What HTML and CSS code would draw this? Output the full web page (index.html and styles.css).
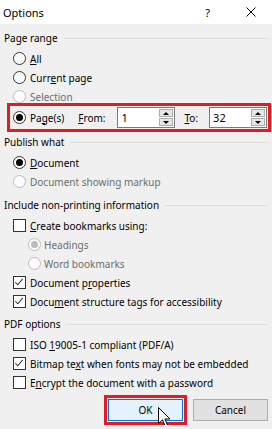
FILE: index.html
```html
<!DOCTYPE html>
<html lang="en">
<head>
    <meta charset="UTF-8">
    <meta name="viewport" content="width=device-width, initial-scale=1.0">
    <title>Options</title>
    <link rel="stylesheet" href="styles.css">
</head>
<body>

<div class="titlebar">
    <span class="title">Options</span>
    <span class="help">?</span>
    <svg class="close" width="10" height="10" viewBox="0 0 10 10">
        <path d="M0.5 0.5 L9.5 9.5 M9.5 0.5 L0.5 9.5" stroke="#000" stroke-width="1" fill="none"/>
    </svg>
</div>

<div class="dialog">
    <div class="group-title first">Page range</div>
    <div class="row first-row"><span class="radio"></span><span><u>A</u>ll</span></div>
    <div class="row"><span class="radio"></span><span>Curr<u>e</u>nt page</span></div>
    <div class="row disabled"><span class="radio"></span><span>Selection</span></div>

    <div class="highlight page-row">
        <span class="radio checked"></span>
        <span class="page-label">Pa<u>g</u>e(s)</span>
        <span class="from-label"><u>F</u>rom:</span>
        <div class="spinner from-spin">
            <span class="spin-value">1</span>
            <span class="spin-buttons">
                <span class="spin-btn"><span class="arrow-up"></span></span>
                <span class="spin-btn"><span class="arrow-down"></span></span>
            </span>
        </div>
        <span class="to-label"><u>T</u>o:</span>
        <div class="spinner to-spin">
            <span class="spin-value">32</span>
            <span class="spin-buttons">
                <span class="spin-btn"><span class="arrow-up"></span></span>
                <span class="spin-btn"><span class="arrow-down"></span></span>
            </span>
        </div>
    </div>

    <div class="group-title publish">Publish what</div>
    <div class="row first-row"><span class="radio checked"></span><span><u>D</u>ocument</span></div>
    <div class="row disabled"><span class="radio"></span><span>Document showing markup</span></div>

    <div class="group-title include">Include non-printing information</div>
    <div class="row first-row"><span class="checkbox"></span><span><u>C</u>reate bookmarks using:</span></div>
    <div class="row sub disabled"><span class="radio checked"></span><span>Headings</span></div>
    <div class="row sub disabled"><span class="radio"></span><span>Word bookmarks</span></div>
    <div class="row"><span class="checkbox checked"></span><span>Document p<u>r</u>operties</span></div>
    <div class="row"><span class="checkbox checked"></span><span>Docu<u>m</u>ent structure tags for accessibility</span></div>

    <div class="group-title pdf">PDF options</div>
    <div class="row first-row"><span class="checkbox"></span><span>ISO <u>1</u>9005-1 compliant (PDF/A)</span></div>
    <div class="row"><span class="checkbox checked"></span><span>Bitmap te<u>x</u>t when fonts may not be embedded</span></div>
    <div class="row"><span class="checkbox"></span><span>E<u>n</u>crypt the document with a password</span></div>

    <div class="buttons">
        <div class="highlight ok-wrap">
            <button class="btn btn-default">OK</button>
            <svg class="cursor" width="13" height="21" viewBox="0 0 13 21">
                <path d="M0.5 0.5 L0.5 16.5 L4.5 12.8 L7.3 19.5 L9.6 18.5 L6.9 12 L12 12 Z" fill="#fff" stroke="#000" stroke-width="1" stroke-linejoin="miter"/>
            </svg>
        </div>
        <button class="btn">Cancel</button>
    </div>
</div>

</body>
</html>
```

FILE: styles.css
```css
body {
    font-family: "Noto Sans", "Open Sans", sans-serif;
    font-size: 10px;
    margin: 0;
    background-color: #f0f0f0;
    color: #000;
}
u {
    text-underline-offset: 1px;
}
.titlebar {
    height: 24px;
    background: #fff;
    display: flex;
    align-items: center;
    padding-left: 3px;
}
.title {
    font-size: 11px;
    flex: 1;
}
.help {
    font-size: 11px;
    margin-right: 36px;
}
.close {
    margin-right: 16px;
}
.dialog {
    padding: 0 4px 0 4px;
}
.group-title {
    height: 16px;
    display: flex;
    align-items: center;
    gap: 6px;
    white-space: nowrap;
}
.group-title::after {
    content: "";
    flex: 1;
    height: 1px;
    background: #dcdcdc;
}
.group-title.first {
    margin-top: 6px;
}
.group-title.publish {
    margin-top: 2px;
}
.group-title.include {
    margin-top: 6px;
}
.group-title.pdf {
    margin-top: 5px;
}
.row {
    height: 19px;
    display: flex;
    align-items: center;
    gap: 4px;
    padding-left: 9px;
    white-space: nowrap;
}
.row.first-row {
    margin-top: 3px;
}
.row.sub {
    padding-left: 24px;
    gap: 3px;
}
.disabled {
    color: #6d6d6d;
}
.radio {
    width: 13px;
    height: 13px;
    box-sizing: border-box;
    border: 1px solid #333;
    border-radius: 50%;
    background: #fff;
    display: flex;
    align-items: center;
    justify-content: center;
    flex: none;
}
.radio.checked::after {
    content: "";
    width: 7px;
    height: 7px;
    border-radius: 50%;
    background: #000;
}
.disabled .radio {
    border-color: #bcbcbc;
    background: #fcfcfc;
}
.disabled .radio.checked::after {
    background: #bcbcbc;
}
.checkbox {
    width: 13px;
    height: 13px;
    box-sizing: border-box;
    border: 1px solid #333;
    background: #fff;
    flex: none;
    position: relative;
}
.checkbox.checked::after {
    content: "";
    position: absolute;
    left: 3px;
    top: 0px;
    width: 3px;
    height: 7px;
    border-right: 1px solid #333;
    border-bottom: 1px solid #333;
    transform: rotate(40deg);
}
.highlight {
    border: 3px solid #e31b23;
}
.page-row {
    margin: -3px -3px 0 3px;
    height: 23px;
    display: flex;
    align-items: center;
    padding-left: 3px;
    white-space: nowrap;
}
.page-label {
    margin-left: 4px;
}
.from-label {
    margin-left: 14px;
}
.to-label {
    margin-left: 9px;
}
.spinner {
    width: 58px;
    height: 21px;
    box-sizing: border-box;
    border: 1px solid #7a7a7a;
    background: #fff;
    display: flex;
    align-items: center;
}
.from-spin {
    margin-left: 12px;
}
.to-spin {
    margin-left: 11px;
}
.spin-value {
    flex: 1;
    padding-left: 3px;
    font-size: 11px;
}
.spin-buttons {
    display: flex;
    flex-direction: column;
    gap: 1px;
    margin-right: 1px;
}
.spin-btn {
    width: 14px;
    height: 8px;
    box-sizing: border-box;
    border: 1px solid #adadad;
    background: #e6e6e6;
    display: flex;
    align-items: center;
    justify-content: center;
}
.arrow-up {
    width: 0;
    height: 0;
    border-left: 3px solid transparent;
    border-right: 3px solid transparent;
    border-bottom: 3px solid #000;
}
.arrow-down {
    width: 0;
    height: 0;
    border-left: 3px solid transparent;
    border-right: 3px solid transparent;
    border-top: 3px solid #000;
}
.buttons {
    margin-top: 3px;
    display: flex;
    justify-content: flex-end;
    align-items: center;
    gap: 6px;
}
.ok-wrap {
    position: relative;
    padding: 1px;
}
.btn {
    width: 75px;
    height: 22px;
    box-sizing: border-box;
    border: 1px solid #adadad;
    background: #e1e1e1;
    font-family: "Noto Sans", "Open Sans", sans-serif;
    font-size: 10px;
    color: #000;
    padding: 0;
    display: block;
}
.btn-default {
    border-color: #0078d7;
    background: #e5f1fb;
}
.cursor {
    position: absolute;
    left: 51px;
    top: 9px;
}
```
